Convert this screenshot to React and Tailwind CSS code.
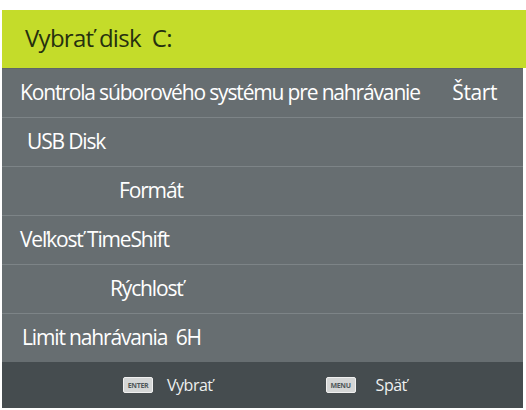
const rows = [
  { label: "Kontrola súborového systému pre nahrávanie", value: "Štart", pad: "pl-[18px]", first: true },
  { label: "USB Disk", pad: "pl-[25px]" },
  { label: "Formát", pad: "pl-[117px]" },
  { label: "Veľkosť TimeShift", pad: "pl-[18px]" },
  { label: "Rýchlosť", pad: "pl-[108px]" },
  { label: "Limit nahrávania  6H", pad: "pl-[20px]" },
];

const KeyIcon = ({ text }) => (
  <span className="inline-flex items-center justify-center w-[30px] h-[16px] rounded-[2px] bg-[#d4d6d6] border border-[#f0f0f0] text-[7px] font-bold leading-none text-[#50585a] tracking-tighter">
    {text}
  </span>
);

export default function App() {
  return (
    <div
      className="w-[526px] h-[410px] bg-white pt-[10px] pl-[2px]"
      style={{ fontFamily: '"Open Sans", "Noto Sans", sans-serif' }}
    >
      <div className="h-[58px] bg-[#c4dc2a] flex items-center pl-[23px] pb-[3px]">
        <span className="text-[24px] font-medium text-[#26300f] tracking-[-0.03em]">Vybrať disk&nbsp;&nbsp;C:</span>
      </div>
      <div className="w-[521px] bg-[#676e71]">
        {rows.map((r, i) => (
          <div
            key={i}
            className={`h-[49px] flex items-center justify-between border-t border-[#7d8487] ${r.pad} pr-[26px] text-white ${i === 0 ? "border-t-[#5f6669]" : ""}`}
          >
            <span className="text-[21px] tracking-[-0.055em] whitespace-pre">{r.label}</span>
            {r.value && <span className="text-[21px] tracking-[-0.02em]">{r.value}</span>}
          </div>
        ))}
        <div className="h-[46px] bg-[#454c4f] flex items-center text-[#eef0ef] text-[16px] tracking-[-0.03em]">
          <div className="pl-[121px] flex items-center">
            <KeyIcon text="ENTER" />
            <span className="ml-[14px]">Vybrať</span>
          </div>
          <div className="pl-[113px] flex items-center">
            <KeyIcon text="MENU" />
            <span className="ml-[20px]">Späť</span>
          </div>
        </div>
      </div>
    </div>
  );
}
